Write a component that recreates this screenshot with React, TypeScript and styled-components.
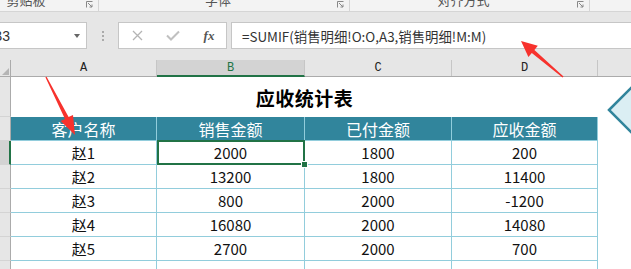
import * as React from 'react';
import styled, { createGlobalStyle } from 'styled-components';

const GlobalStyle = createGlobalStyle`
  html, body {
    margin: 0;
    padding: 0;
    background: #ffffff;
  }
`;

const GREEN = '#217346';
const TEAL = '#31859c';
const GRID = '#92cddc';

const Page = styled.div`
  width: 631px;
  height: 269px;
  overflow: hidden;
  position: relative;
  background: #e6e6e6;
  font-family: 'Noto Sans CJK SC', 'Liberation Sans', sans-serif;
`;

/* ribbon group labels, only the bottom sliver is on screen */
const Ribbon = styled.div`
  display: flex;
  height: 11px;
  margin-left: -34px;
  background: #f3f3f3;
  border-bottom: 1px solid #d5d5d5;
  overflow: hidden;
`;

const RibbonGroup = styled.div<{ $w: number }>`
  width: ${(p) => p.$w}px;
  flex: none;
  display: flex;
  align-items: flex-start;
  border-right: 1px solid #d5d5d5;
`;

const GroupLabel = styled.div`
  flex: 1;
  text-align: center;
  font-size: 13px;
  line-height: 13px;
  margin-top: -7px;
  color: #555;
`;

const Launcher = styled.svg`
  width: 7px;
  height: 7px;
  margin: 1px 5px 0 0;
`;

const FormulaBar = styled.div`
  display: flex;
  align-items: center;
  height: 27px;
  margin: 10px 0 11px;
`;

const NameBox = styled.div`
  width: 88px;
  height: 27px;
  box-sizing: border-box;
  margin-left: -1px;
  flex: none;
  display: flex;
  align-items: center;
  justify-content: space-between;
  background: #fff;
  border: 1px solid #c6c6c6;
  overflow: hidden;
  font-family: 'Liberation Sans', sans-serif;
  font-size: 14px;
  color: #333;
`;

const NameText = styled.span`
  margin-left: -7px;
`;

const Caret = styled.span`
  width: 0;
  height: 0;
  margin-right: 6px;
  border-left: 3.5px solid transparent;
  border-right: 3.5px solid transparent;
  border-top: 4px solid #666;
`;

const Dots = styled.div`
  width: 2px;
  margin: 0 14px 0 15px;
  display: flex;
  flex-direction: column;
  gap: 2px;
  span {
    width: 2px;
    height: 2px;
    background: #aaa;
  }
`;

const FxBox = styled.div`
  width: 109px;
  height: 27px;
  box-sizing: border-box;
  flex: none;
  display: flex;
  align-items: center;
  background: #fff;
  border: 1px solid #c6c6c6;
  margin-right: 4px;
`;

const FxSlot = styled.span`
  width: 36px;
  flex: none;
  display: flex;
  align-items: center;
  justify-content: center;
  svg {
    flex: none;
  }
`;

const FxText = styled.span`
  font-family: 'Liberation Serif', serif;
  font-style: italic;
  font-weight: 700;
  font-size: 13px;
  color: #555;
  white-space: nowrap;
`;

const FormulaInput = styled.div`
  flex: 1;
  height: 27px;
  box-sizing: border-box;
  display: flex;
  align-items: center;
  padding-left: 10px;
  margin-right: -2px;
  background: #fff;
  border: 1px solid #c6c6c6;
  font-size: 13.4px;
  color: #333;
  white-space: nowrap;
`;

const COLS = '11px 146px 148px 147px 146px 1fr';

const ColHeader = styled.div`
  display: grid;
  grid-template-columns: ${COLS};
  height: 17px;
  border-bottom: 1px solid #ababab;
  box-sizing: border-box;
`;

const Corner = styled.div`
  position: relative;
  border-right: 1px solid #ababab;
  &::after {
    content: '';
    position: absolute;
    right: 1px;
    bottom: 1px;
    border-left: 7px solid transparent;
    border-bottom: 7px solid #b5b5b5;
  }
`;

const ColLetter = styled.div<{ $active?: boolean }>`
  display: flex;
  align-items: center;
  justify-content: center;
  font-family: 'Liberation Mono', monospace;
  font-size: 12px;
  color: ${(p) => (p.$active ? GREEN : '#222')};
  background: ${(p) => (p.$active ? '#d3d3d3' : 'transparent')};
  border-right: 1px solid #c6c6c6;
  box-sizing: border-box;
  ${(p) => (p.$active ? `border-bottom: 2px solid ${GREEN}; margin-bottom: -1px;` : '')}
`;

const Sheet = styled.div`
  display: grid;
  grid-template-columns: ${COLS};
  grid-template-rows: 40px;
  grid-auto-rows: 24px;
  background: #fff;
`;

const RowHead = styled.div<{ $active?: boolean }>`
  background: ${(p) => (p.$active ? '#d3d3d3' : '#e6e6e6')};
  border-right: ${(p) => (p.$active ? `2px solid ${GREEN}` : '1px solid #ababab')};
  border-bottom: 1px solid #d4d4d4;
  box-sizing: border-box;
`;

const TitleCell = styled.div`
  grid-column: 2 / span 4;
  display: flex;
  align-items: center;
  justify-content: center;
  font-size: 19px;
  font-weight: 700;
  color: #000;
  letter-spacing: 0.5px;
`;

const Cell = styled.div<{ $head?: boolean; $selected?: boolean; $low?: boolean }>`
  position: relative;
  display: flex;
  align-items: ${(p) => (p.$low ? 'flex-start' : 'center')};
  padding-top: ${(p) => (p.$low ? 6 : 0)}px;
  justify-content: center;
  box-sizing: border-box;
  border-right: 1px solid ${GRID};
  border-bottom: 1px solid ${GRID};
  font-size: ${(p) => (p.$head ? 16 : 15)}px;
  color: ${(p) => (p.$head ? '#fff' : '#111')};
  background: ${(p) => (p.$head ? TEAL : '#fff')};
  ${(p) =>
    p.$selected
      ? `
    &::after {
      content: '';
      position: absolute;
      left: 0;
      top: -1px;
      right: -1px;
      bottom: -1px;
      border: 2px solid ${GREEN};
    }
    &::before {
      content: '';
      position: absolute;
      right: -4px;
      bottom: -4px;
      width: 5px;
      height: 5px;
      background: ${GREEN};
      border: 1px solid #fff;
      z-index: 2;
    }
  `
      : ''}
`;

const Blank = styled.div`
  background: #fff;
`;

const Overlay = styled.svg`
  position: absolute;
  left: 0;
  top: 0;
  width: 631px;
  height: 269px;
  pointer-events: none;
`;

const rows = [
  ['赵1', '2000', '1800', '200'],
  ['赵2', '13200', '1800', '11400'],
  ['赵3', '800', '2000', '-1200'],
  ['赵4', '16080', '2000', '14080'],
  ['赵5', '2700', '2000', '700'],
  ['', '1', '1', '1'],
];

const launcher = (
  <Launcher viewBox="0 0 7 7">
    <path d="M0.5 6.5V0.5H6.5" fill="none" stroke="#888" />
    <path d="M2 2L6 6M6 3.5V6H3.5" fill="none" stroke="#888" />
  </Launcher>
);

const App: React.FC = () => {
  return (
    <>
      <GlobalStyle />
      <Page>
        <Ribbon>
          <RibbonGroup $w={132}>
            <GroupLabel>剪贴板</GroupLabel>
            {launcher}
          </RibbonGroup>
          <RibbonGroup $w={250}>
            <GroupLabel>字体</GroupLabel>
            {launcher}
          </RibbonGroup>
          <RibbonGroup $w={239}>
            <GroupLabel>对齐方式</GroupLabel>
            {launcher}
          </RibbonGroup>
        </Ribbon>

        <FormulaBar>
          <NameBox>
            <NameText>B3</NameText>
            <Caret />
          </NameBox>
          <Dots>
            <span />
            <span />
            <span />
          </Dots>
          <FxBox>
            <FxSlot>
              <svg width="11" height="11" viewBox="0 0 11 11">
                <path d="M1 1L10 10M10 1L1 10" stroke="#b4b4b4" strokeWidth="1.3" />
              </svg>
            </FxSlot>
            <FxSlot>
              <svg width="14" height="11" viewBox="0 0 14 11">
                <path d="M1 5.5L5 9.5L13 1.5" fill="none" stroke="#c0c0c0" strokeWidth="2" />
              </svg>
            </FxSlot>
            <FxSlot>
              <FxText>fx</FxText>
            </FxSlot>
          </FxBox>
          <FormulaInput>=SUMIF(销售明细!O:O,A3,销售明细!M:M)</FormulaInput>
        </FormulaBar>

        <ColHeader>
          <Corner />
          <ColLetter>A</ColLetter>
          <ColLetter $active>B</ColLetter>
          <ColLetter>C</ColLetter>
          <ColLetter>D</ColLetter>
          <div />
        </ColHeader>

        <Sheet>
          <RowHead />
          <TitleCell>应收统计表</TitleCell>
          <Blank />

          <RowHead />
          <Cell $head>客户名称</Cell>
          <Cell $head>销售金额</Cell>
          <Cell $head>已付金额</Cell>
          <Cell $head>应收金额</Cell>
          <Blank />

          {rows.map((r, i) => (
            <React.Fragment key={i}>
              <RowHead $active={i === 0} />
              {r.map((v, j) => (
                <Cell key={j} $selected={i === 0 && j === 1} $low={i === rows.length - 1}>
                  {v}
                </Cell>
              ))}
              <Blank />
            </React.Fragment>
          ))}
        </Sheet>

        <Overlay viewBox="0 0 631 269">
          {/* shape at the right edge */}
          <polygon points="609,110 632,87 655,110 632,133" fill="#dbeef3" stroke={TEAL} strokeWidth="2.5" />
          {/* red pointer arrows */}
          <polygon
            points="563.5,76.6 534.4,49.9 537.8,45.8 521,41 528.4,57 531.8,52.9 562.5,77.4"
            fill="#f7322d"
          />
          <polygon
            points="45.4,77.2 65,118.9 60.6,121.1 75,135 73,114.9 68.6,117.1 46.6,76.8"
            fill="#f7322d"
          />
        </Overlay>
      </Page>
    </>
  );
};

export default App;
